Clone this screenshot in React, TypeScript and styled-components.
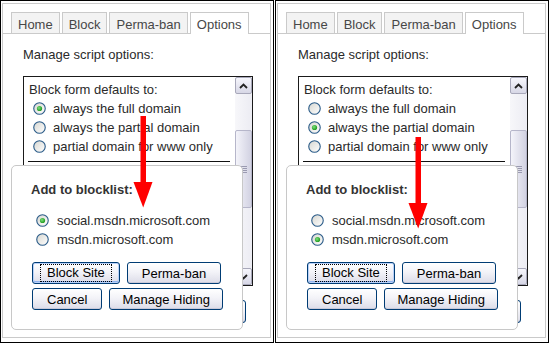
import React from 'react';
import styled, { createGlobalStyle } from 'styled-components';

const Global = createGlobalStyle`
  html, body { margin: 0; padding: 0; background: #fff; }
  body { font-family: "Liberation Sans", Arial, sans-serif; font-size: 13px; color: #2a2a2a; }
  * { box-sizing: border-box; }
`;

const Stage = styled.div`
  display: flex;
  gap: 1px;
  width: 550px;
  height: 343px;
`;

const Panel = styled.div`
  position: relative;
  width: 274px;
  height: 343px;
  border: 1px solid #000;
  padding: 2px 2px 4px 1px;
  overflow: hidden;
`;

const Frame = styled.div`
  height: 100%;
  border: 1px solid #cacaca;
  padding-top: 8px;
`;

const TabStrip = styled.div`
  display: flex;
  align-items: flex-end;
  gap: 2px;
  height: 22px;
  padding-left: 8px;
  border-bottom: 1px solid #cacaca;
`;

const Tab = styled.div<{ $active?: boolean }>`
  height: ${(p) => (p.$active ? 22 : 21)}px;
  margin-bottom: ${(p) => (p.$active ? -1 : 0)}px;
  padding: 2px 6px 0;
  line-height: 19px;
  border: 1px solid #cacaca;
  border-bottom: none;
  background: ${(p) => (p.$active ? '#fff' : '#f3f3f3')};
  color: #474747;
  white-space: nowrap;
`;

const Content = styled.div`
  padding: 11px 0 0 20px;
`;

const Heading = styled.div`
  line-height: 19px;
  margin-bottom: 12px;
`;

const ListBox = styled.div`
  display: flex;
  width: 230px;
  height: 210px;
  border: 1px solid #1a1a1a;
`;

const ListInner = styled.div`
  flex: 1;
  padding: 3px 0 0 5px;
  overflow: hidden;
`;

const Line = styled.div`
  line-height: 19px;
  white-space: nowrap;
`;

const RadioRow = styled.label<{ $indent: number; $gap: number }>`
  display: flex;
  align-items: center;
  height: 19px;
  padding-left: ${(p) => p.$indent}px;
  gap: ${(p) => p.$gap}px;
  white-space: nowrap;
`;

const Rule = styled.div`
  margin: 5px 5px 0 -1px;
  border-top: 1px solid #111;
`;

const ScrollBar = styled.div`
  width: 17px;
  display: flex;
  flex-direction: column;
  background: linear-gradient(90deg, #f7f7fa, #ececf3);
`;

const ScrollButton = styled.div`
  width: 17px;
  height: 17px;
  display: flex;
  align-items: center;
  justify-content: center;
  border: 1px solid #a8a8ba;
  border-radius: 2px;
  background: linear-gradient(180deg, #f6f6fc, #d7d7e6);
`;

const Track = styled.div`
  flex: 1;
  padding-top: 36px;
`;

const Thumb = styled.div`
  height: 78px;
  border: 1px solid #b6b6ca;
  border-radius: 2px;
  background: linear-gradient(90deg, #f4f4fa, #d2d2e2);
  display: flex;
  flex-direction: column;
  align-items: center;
  justify-content: center;
  gap: 1px;
`;

const Grip = styled.div`
  width: 7px;
  height: 1px;
  background: #9a9ab0;
`;

const ButtonBar = styled.div`
  display: flex;
  justify-content: flex-end;
  width: 230px;
  padding-right: 7px;
  margin-top: 14px;
`;

const XPButton = styled.button<{ $default?: boolean; $px?: number }>`
  height: 22px;
  padding: 0 ${(p) => (p.$default ? 7 : p.$px ?? 14)}px;
  font-family: "Liberation Sans", Arial, sans-serif;
  font-size: 13px;
  color: #000;
  border: 1px solid #003c74;
  border-radius: 3px;
  background: linear-gradient(180deg, #ffffff 0%, #f3f3f8 45%, #dcdce8 100%);
  box-shadow: ${(p) =>
    p.$default ? 'inset 0 0 0 1px #b9d1f9, inset 0 -1px 0 1px #8eb2ee' : 'inset 0 -1px 0 #c9c9d9'};
  display: flex;
  align-items: center;
  justify-content: center;
  white-space: nowrap;
  cursor: default;
`;

const HiddenSaveButton = styled(XPButton)`
  height: 23px;
  width: 66px;
`;

const FocusRing = styled.span`
  display: block;
  padding: 0 6px;
  line-height: 16px;
  border: 1px dotted #000;
`;

const Popup = styled.div`
  position: absolute;
  left: 10px;
  top: 164px;
  width: 232px;
  height: 165px;
  border: 1px solid #c8c8c8;
  border-radius: 5px;
  background: #fff;
  padding: 14px 0 0 19px;
  z-index: 2;
`;

const PopupTitle = styled.div`
  font-weight: bold;
  line-height: 19px;
  margin-bottom: 12px;
  color: #333;
`;

const ButtonGrid = styled.div`
  display: flex;
  flex-direction: column;
  gap: 4px;
  margin-top: 13px;
  padding-left: 1px;
`;

const ButtonRow = styled.div`
  display: flex;
  gap: 7px;
`;

const ArrowSvg = styled.svg<{ $top: number }>`
  position: absolute;
  left: 132px;
  top: ${(p) => p.$top}px;
  z-index: 3;
`;

const RadioSvg = styled.svg`
  flex: none;
  display: block;
`;

function Radio({ checked }: { checked?: boolean }) {
  return (
    <RadioSvg width="13" height="13" viewBox="0 0 13 13">
      <defs>
        <linearGradient id="rfill" x1="0" y1="0" x2="1" y2="1">
          <stop offset="0" stopColor="#d6d6d0" />
          <stop offset="1" stopColor="#ffffff" />
        </linearGradient>
        <radialGradient id="rdot" cx="0.4" cy="0.4" r="0.6">
          <stop offset="0" stopColor="#7de07d" />
          <stop offset="1" stopColor="#1e9a1e" />
        </radialGradient>
      </defs>
      <circle cx="6.5" cy="6.5" r="5.75" fill="url(#rfill)" stroke="#2a5b88" strokeWidth="1.1" />
      {checked && <circle cx="6.5" cy="6.5" r="2.6" fill="url(#rdot)" />}
    </RadioSvg>
  );
}

function Arrow({ top }: { top: number }) {
  return (
    <ArrowSvg $top={top} width="20" height="92" viewBox="0 0 20 92">
      <rect x="7.5" y="0" width="5.5" height="68" fill="#f00" />
      <polygon points="0.5,66 19.5,66 10.2,91.5" fill="#f00" />
    </ArrowSvg>
  );
}

function Caret({ down }: { down?: boolean }) {
  return (
    <svg width="9" height="6" viewBox="0 0 9 6">
      <polyline
        points={down ? '1,1 4.5,4.5 8,1' : '1,5 4.5,1.5 8,5'}
        fill="none"
        stroke="#222"
        strokeWidth="1.8"
      />
    </svg>
  );
}

function OptionsPanel({ defaultIdx, listIdx, arrowTop }: { defaultIdx: number; listIdx: number; arrowTop: number }) {
  const defaults = ['always the full domain', 'always the partial domain', 'partial domain for www only'];
  const domains = ['social.msdn.microsoft.com', 'msdn.microsoft.com'];
  return (
    <Panel>
      <Frame>
        <TabStrip>
          <Tab>Home</Tab>
          <Tab>Block</Tab>
          <Tab>Perma-ban</Tab>
          <Tab $active>Options</Tab>
        </TabStrip>
        <Content>
          <Heading>Manage script options:</Heading>
          <ListBox>
            <ListInner>
              <Line>Block form defaults to:</Line>
              {defaults.map((d, i) => (
                <RadioRow key={d} $indent={4} $gap={7}>
                  <Radio checked={i === defaultIdx} />
                  {d}
                </RadioRow>
              ))}
              <Rule />
            </ListInner>
            <ScrollBar>
              <ScrollButton>
                <Caret />
              </ScrollButton>
              <Track>
                <Thumb>
                  <Grip />
                  <Grip />
                  <Grip />
                  <Grip />
                </Thumb>
              </Track>
              <ScrollButton>
                <Caret down />
              </ScrollButton>
            </ScrollBar>
          </ListBox>
          <ButtonBar>
            <HiddenSaveButton aria-label="Save options" />
          </ButtonBar>
        </Content>
      </Frame>
      <Popup>
        <PopupTitle>Add to blocklist:</PopupTitle>
        {domains.map((d, i) => (
          <RadioRow key={d} $indent={5} $gap={8}>
            <Radio checked={i === listIdx} />
            {d}
          </RadioRow>
        ))}
        <ButtonGrid>
          <ButtonRow>
            <XPButton $default>
              <FocusRing>Block Site</FocusRing>
            </XPButton>
            <XPButton>Perma-ban</XPButton>
          </ButtonRow>
          <ButtonRow>
            <XPButton>Cancel</XPButton>
            <XPButton $px={12}>Manage Hiding</XPButton>
          </ButtonRow>
        </ButtonGrid>
      </Popup>
      <Arrow top={arrowTop} />
    </Panel>
  );
}

export default function App() {
  return (
    <>
      <Global />
      <Stage>
        <OptionsPanel defaultIdx={0} listIdx={0} arrowTop={115} />
        <OptionsPanel defaultIdx={1} listIdx={1} arrowTop={136} />
      </Stage>
    </>
  );
}
